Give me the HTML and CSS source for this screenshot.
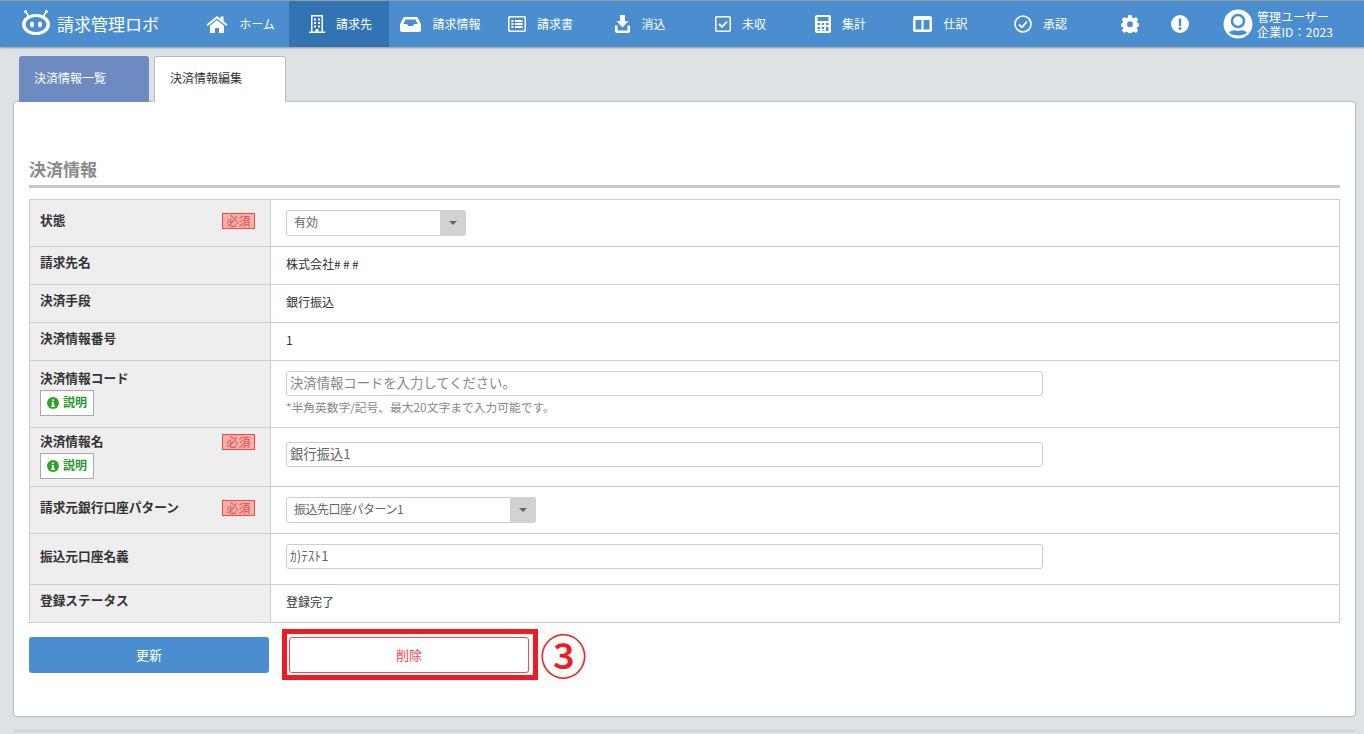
FILE: index.html
```html
<!DOCTYPE html>
<html lang="ja">
<head>
<meta charset="utf-8">
<title>決済情報編集</title>
<link rel="stylesheet" href="styles.css">
</head>
<body>
<header class="topbar">
  <a class="logo">
    <svg class="logo-mark" width="30" height="28" viewBox="0 0 30 28"><path d="M5 3 8 8M25 3l-3 5" stroke="#fff" stroke-width="1.5"/><circle cx="4.500" cy="2.500" r="1.500" fill="#fff"/><circle cx="25.500" cy="2.500" r="1.500" fill="#fff"/><ellipse cx="15" cy="15.500" rx="14" ry="10.500" fill="#fff"/><ellipse cx="15" cy="15.500" rx="10.500" ry="7.500" fill="#4a8ecf"/><ellipse cx="11" cy="15.500" rx="2" ry="3" fill="#fff"/><ellipse cx="19" cy="15.500" rx="2" ry="3" fill="#fff"/></svg>
    <span class="logo-text">請求管理ロボ</span>
  </a>
  <nav class="nav">
    <a class="nav-item"><svg class="ic" width="22" height="18" viewBox="0 0 22 18"><path d="M11 1 0.500 9.500l1.300 1.600L11 3.600l9.200 7.500 1.300-1.600L17.500 6.200V1.500h-3v2.200z" fill="#fff"/><path d="M11 5 4 10.700V18h5v-5h4v5h5v-7.300z" fill="#fff"/></svg><span>ホーム</span></a>
    <a class="nav-item active"><svg class="ic" width="16" height="18" viewBox="0 0 16 18"><path fill-rule="evenodd" d="M2 0h12v16.500h2V18H0v-1.500h2zM3.500 1.500v15h3V14h3v2.500h3v-15zM5 3.500h2v2H5zM9 3.500h2v2H9zM5 7h2v2H5zM9 7h2v2H9zM5 10.500h2v2H5zM9 10.500h2v2H9z" fill="#fff"/></svg><span>請求先</span></a>
    <a class="nav-item"><svg class="ic" width="21" height="15" viewBox="0 0 21 15"><path fill-rule="evenodd" d="M5 0h11c1 0 1.500.5 2 1.300l3 6.200V13c0 1.200-.8 2-2 2H2c-1.200 0-2-.8-2-2V7.500l3-6.200C3.500.5 4 0 5 0zM5.500 2.500 3.300 7H7l1 2h5l1-2h3.700l-2.200-4.500z" fill="#fff"/></svg><span>請求情報</span></a>
    <a class="nav-item"><svg class="ic" width="18" height="16" viewBox="0 0 18 16"><path fill-rule="evenodd" d="M2 0h14c1.100 0 2 .9 2 2v12c0 1.100-.9 2-2 2H2c-1.100 0-2-.9-2-2V2C0 .9.900 0 2 0zm0 1.500c-.3 0-.5.200-.5.500v12c0 .3.200.5.500.5h14c.3 0 .5-.2.500-.5V2c0-.3-.2-.5-.5-.5zM3.500 4h2v2h-2zm3.500 0h7.500v2H7zM3.500 7h2v2h-2zM7 7h7.500v2H7zm-3.500 3h2v2h-2zm3.500 0h7.500v2H7z" fill="#fff"/></svg><span>請求書</span></a>
    <a class="nav-item"><svg class="ic" width="15" height="18" viewBox="0 0 15 18"><path d="M5 0h5v6h3.500L7.500 12.500 1.500 6H5z" fill="#fff"/><path d="M0 10.500h2.500v5h10v-5H15V16c0 1.100-.9 2-2 2H2c-1.100 0-2-.9-2-2z" fill="#fff"/></svg><span>消込</span></a>
    <a class="nav-item"><svg class="ic" width="16" height="16" viewBox="0 0 16 16"><path fill-rule="evenodd" d="M2 0h12c1.100 0 2 .9 2 2v12c0 1.100-.9 2-2 2H2c-1.100 0-2-.9-2-2V2C0 .9.900 0 2 0zm0 1.500c-.3 0-.5.200-.5.500v12c0 .3.200.5.500.5h12c.3 0 .5-.2.500-.5V2c0-.3-.2-.5-.5-.5z" fill="#fff"/><path d="M4 8l3 3 5-5.500" fill="none" stroke="#fff" stroke-width="1.800"/></svg><span>未収</span></a>
    <a class="nav-item"><svg class="ic" width="16" height="18" viewBox="0 0 16 18"><path fill-rule="evenodd" d="M2 0h12c1.100 0 2 .9 2 2v14c0 1.100-.9 2-2 2H2c-1.100 0-2-.9-2-2V2C0 .9.900 0 2 0zm.5 2v4h11V2zm0 6v2H5V8zm4.250 0v2h2.500V8zM11 8v2h2.500V8zM2.500 12v2H5v-2zm4.250 0v2h2.500v-2zM11 12v4h2.500v-4zM2.500 15.200V16H5v-.8zm4.250 0V16h2.500v-.8z" fill="#fff"/></svg><span>集計</span></a>
    <a class="nav-item"><svg class="ic" width="19" height="16" viewBox="0 0 19 16"><path fill-rule="evenodd" d="M2 0h15c1.100 0 2 .9 2 2v12c0 1.100-.9 2-2 2H2c-1.100 0-2-.9-2-2V2C0 .9.900 0 2 0zm.5 4v9.500h6V4zm8 0v9.500h6V4z" fill="#fff"/></svg><span>仕訳</span></a>
    <a class="nav-item"><svg class="ic" width="18" height="18" viewBox="0 0 18 18"><circle cx="9" cy="9" r="8" fill="none" stroke="#fff" stroke-width="1.600"/><path d="M5 9.500l3 2.800 5-5.800" fill="none" stroke="#fff" stroke-width="1.800"/></svg><span>承認</span></a>
  </nav>
  <div class="tools">
    <svg class="tool" width="18" height="18" viewBox="0 0 18 18"><path fill-rule="evenodd" d="M7.300 0h3.400l.5 2.500 1.500.7 2.200-1.300 2.300 2.500L15.700 6.500l.6 1.400 1.700.5v3.200l-1.700.5-.6 1.400 1.500 2.100-2.300 2.300-2.200-1.300-1.500.6-.5 1.300H7.300l-.5-1.300-1.500-.6-2.200 1.300L.800 15.600l1.500-2.100-.6-1.400L0 11.600V8.400l1.700-.5.6-1.400L.800 4.400l2.300-2.500 2.200 1.300 1.500-.7zM9 6.300a3 3 0 1 0 0 6 3 3 0 0 0 0-6z" fill="#fff"/></svg>
    <svg class="tool" width="18" height="18" viewBox="0 0 18 18"><path fill-rule="evenodd" d="M9 0a9 9 0 1 1 0 18A9 9 0 0 1 9 0zM7.700 3.500l.3 7.500h2l.3-7.500zM9 12a1.500 1.500 0 1 0 0 3 1.500 1.500 0 0 0 0-3z" fill="#fff"/></svg>
  </div>
  <div class="user">
    <svg width="30" height="30" viewBox="0 0 30 30"><circle cx="15" cy="15" r="14.500" fill="#fff"/><circle cx="15" cy="12" r="6" fill="none" stroke="#4a8ecf" stroke-width="2.500"/><path d="M6 24c2-3 5-3.500 9-2 4-1.500 7-1 9 2-2 1.500-5 2.500-9 2.500S8 25.500 6 24z" fill="#4a8ecf"/></svg>
    <div class="user-text"><div>管理ユーザー</div><div class="company">企業ID：2023</div></div>
  </div>
</header>

<main class="page">
  <div class="tabs">
    <a class="tab tab-off">決済情報一覧</a>
    <a class="tab tab-on">決済情報編集</a>
  </div>
  <section class="card">
    <h2 class="section-title">決済情報</h2>
    <table class="form">
      <tr class="h47">
        <th class="pt11"><div class="th-line"><span>状態</span><span class="req">必須</span></div></th>
        <td><div class="select w180"><span>有効</span><i class="arrow"></i></div></td>
      </tr>
      <tr class="h38"><th class="pt6">請求先名</th><td class="txt">株式会社<span class="hash">###</span></td></tr>
      <tr class="h38"><th class="pt6">決済手段</th><td class="txt">銀行振込</td></tr>
      <tr class="h38"><th class="pt6">決済情報番号</th><td class="txt">1</td></tr>
      <tr class="h67">
        <th class="pt8">決済情報コード<br><span class="help"><svg width="12" height="12" viewBox="0 0 12 12"><circle cx="6" cy="6" r="6" fill="#2aa52a"/><path d="M5 2.500h2v1.500H5zM4.500 5H7v3.500h.8V10H4.300V8.500H5V6.300h-.5z" fill="#fff"/></svg>説明</span></th>
        <td class="top10"><div class="input placeholder">決済情報コードを入力してください。</div><p class="note">*半角英数字/記号、最大20文字まで入力可能です。</p></td>
      </tr>
      <tr class="h59">
        <th class="pt4"><div class="th-line"><span>決済情報名</span><span class="req">必須</span></div><span class="help"><svg width="12" height="12" viewBox="0 0 12 12"><circle cx="6" cy="6" r="6" fill="#2aa52a"/><path d="M5 2.500h2v1.500H5zM4.500 5H7v3.500h.8V10H4.300V8.500H5V6.300h-.5z" fill="#fff"/></svg>説明</span></th>
        <td class="top14"><div class="input">銀行振込1</div></td>
      </tr>
      <tr class="h47">
        <th class="pt11"><div class="th-line"><span>請求元銀行口座パターン</span><span class="req">必須</span></div></th>
        <td><div class="select w250"><span class="tight">振込先口座パターン1</span><i class="arrow"></i></div></td>
      </tr>
      <tr class="h51"><th class="pt13">振込元口座名義</th><td class="top10"><div class="input">ｶ)ﾃｽﾄ1</div></td></tr>
      <tr class="h38"><th class="pt6">登録ステータス</th><td class="txt">登録完了</td></tr>
    </table>
    <div class="actions">
      <button class="btn btn-primary">更新</button>
      <button class="btn btn-danger">削除</button>
      <span class="callout"></span>
      <span class="callout-num">③</span>
    </div>
  </section>
  <div class="rule"></div>
</main>
</body>
</html>
```
FILE: styles.css
```css
* { box-sizing: border-box; }
html, body { margin: 0; height: 100%; overflow: hidden; }
body {
  background: #dfe2e5;
  color: #333;
  font-family: "Noto Sans CJK JP", "Liberation Sans", sans-serif;
  font-size: 12px;
}
.topbar {
  display: flex;
  align-items: center;
  height: 47px;
  background: #4a8ecf;
  border-top: 1px solid #9a9a9a;
  box-shadow: 0 1px 2px rgba(0,0,0,.35);
  color: #fff;
}
.logo { display: flex; align-items: center; width: 189px; padding-left: 21px; flex: none; }
.logo-mark { flex: none; margin-top: -2px; }
.logo-text { margin-left: 6px; font-size: 17px; font-weight: 400; white-space: nowrap; line-height: 24px; }
.nav { display: flex; height: 100%; flex: none; }
.nav-item {
  display: flex;
  align-items: center;
  justify-content: center;
  gap: 11px;
  width: 100px;
  height: 100%;
  padding-left: 3px;
  white-space: nowrap;
}
.nav-item span { margin-bottom: 2px; }
.nav-item.active { background: #3273b4; }
.ic { flex: none; }
.tools { display: flex; align-items: center; gap: 32px; margin-left: 32px; flex: none; }
.user { display: flex; align-items: center; gap: 4px; margin-left: 34px; flex: none; }
.user-text { line-height: 15px; font-size: 12px; }
.company { letter-spacing: .2px; }
.page { padding: 9px 9px 0 14px; }
.tabs { display: flex; height: 46px; padding-left: 5px; gap: 5px; }
.tab {
  display: flex;
  align-items: center;
  border-radius: 3px 3px 0 0;
  padding-left: 15px;
  height: 46px;
}
.tab-off { width: 130px; background: #6d8bc0; color: #fff; padding-bottom: 4px; }
.tab-on {
  width: 132px;
  background: #fff;
  border: 1px solid #bbb;
  border-bottom: 0;
  padding-bottom: 4px;
  position: relative;
  z-index: 1;
}
.card {
  height: 614px;
  background: #fff;
  border-radius: 3px;
  box-shadow: 0 0 2px rgba(0,0,0,.55);
  padding: 53px 15px 0;
}
.section-title {
  margin: 0 0 11px;
  height: 33px;
  border-bottom: 3px solid #c9c9c9;
  color: #8a8a8a;
  font-size: 17px;
  font-weight: 700;
  line-height: 28px;
}
.form {
  width: 100%;
  table-layout: fixed;
  border-collapse: collapse;
}
.form th, .form td { border: 1px solid #ccc; }
.form th {
  width: 241px;
  background: #eee;
  text-align: left;
  vertical-align: top;
  padding: 0 15px 0 10px;
  font-size: 12.700px;
  font-weight: 700;
  line-height: 18px;
}
.form td { padding: 0 15px; vertical-align: middle; line-height: 18px; }
.form td.txt { padding-bottom: 3px; }
.hash { letter-spacing: 2.300px; }
.h38 { height: 38px; }
.h47 { height: 47px; }
.h51 { height: 51px; }
.h59 { height: 59px; }
.h67 { height: 67px; }
.form th.pt4 { padding-top: 4px; }
.form th.pt6 { padding-top: 6px; }
.form th.pt8 { padding-top: 8px; }
.form th.pt11 { padding-top: 11px; }
.form th.pt13 { padding-top: 13px; }
.form td.top10 { vertical-align: top; padding-top: 10px; }
.form td.top14 { vertical-align: top; padding-top: 14px; }
.th-line { display: flex; justify-content: space-between; align-items: flex-start; }
.req {
  width: 33px;
  height: 16px;
  margin-top: 2px;
  background: #f5b0ab;
  border: 1px solid #f44;
  color: #e0504a;
  font-size: 12px;
  font-weight: 400;
  line-height: 14px;
  text-align: center;
}
.help {
  display: inline-flex;
  align-items: center;
  justify-content: center;
  gap: 4px;
  width: 54px;
  height: 26px;
  margin-top: 3px;
  padding-bottom: 2px;
  background: #fff;
  border: 1px solid #aaa;
  color: #2a9a2a;
  font-size: 12px;
  font-weight: 700;
}
.help svg { margin-top: 2px; }
.select {
  display: flex;
  justify-content: space-between;
  height: 26px;
  background: #fff;
  border: 1px solid #ccc;
  border-radius: 3px;
  color: #666;
  line-height: 22px;
  padding-left: 7px;
}
.tight { letter-spacing: -.5px; }
.w180 { width: 180px; }
.w250 { width: 250px; }
.arrow {
  display: flex;
  align-items: center;
  justify-content: center;
  width: 26px;
  margin: -1px -1px -1px 0;
  background: #d2d2d2;
  border-radius: 0 3px 3px 0;
}
.arrow::after {
  content: "";
  border: 4px solid transparent;
  border-top: 4px solid #666;
  border-bottom: 0;
}
.input {
  width: 757px;
  height: 25px;
  background: #fff;
  border: 1px solid #ccc;
  border-radius: 3px;
  color: #666;
  padding-left: 3px;
  font-size: 13.330px;
  line-height: 21px;
}
.placeholder { color: #888; }
.note { margin: 2px 0 0; color: #888; font-size: 11.750px; line-height: 18px; }
.actions {
  position: relative;
  display: flex;
  gap: 20px;
  margin-top: 14px;
}
.btn {
  width: 240px;
  height: 36px;
  border-radius: 3px;
  font: inherit;
  font-size: 13px;
  padding: 0 0 2px;
}
.btn-primary { background: #4a8ecf; border: 0; color: #fff; }
.btn-danger { background: #fff; border: 1px solid #f44; color: #f44; }
.callout {
  position: absolute;
  left: 253px;
  top: -8px;
  width: 256px;
  height: 51px;
  border: 5px solid #ed1c24;
}
.callout-num {
  position: absolute;
  left: 511px;
  top: -15px;
  color: #ed1c24;
  font-size: 47px;
  font-weight: 500;
  line-height: 64px;
}
.rule { height: 2px; margin-top: 14px; background: #d0d4d8; }
```
